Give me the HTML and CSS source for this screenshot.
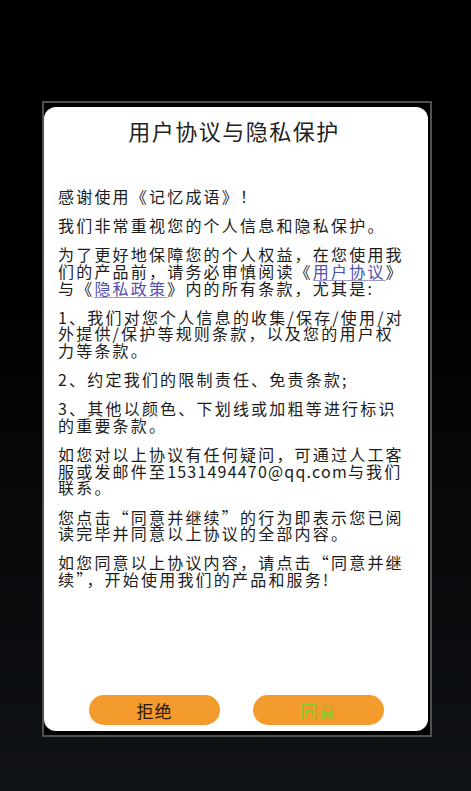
FILE: index.html
```html
<!DOCTYPE html>
<html lang="zh-CN">
<head>
  <meta charset="UTF-8" />
  <meta name="viewport" content="width=device-width, initial-scale=1.0"/>
  <title>用户协议与隐私保护</title>
  <link rel="stylesheet" href="styles.css">
</head>
<body>
  <!-- Privacy dialog -->
  <div class="frame">
    <div class="dialog">
      <h2 class="dialog-title">用户协议与隐私保护</h2>

      <div class="dialog-body">
        <p>感谢使用《记忆成语》！</p>
        <p>我们非常重视您的个人信息和隐私保护。</p>
        <p>为了更好地保障您的个人权益，在您使用我们的产品前，请务必审慎阅读《<a href="#" class="link">用户协议</a>》与《<a href="#" class="link">隐私政策</a>》内的所有条款，尤其是:</p>
        <p>1、我们对您个人信息的收集/保存/使用/对外提供/保护等规则条款，以及您的用户权力等条款。</p>
        <p>2、约定我们的限制责任、免责条款;</p>
        <p>3、其他以颜色、下划线或加粗等进行标识的重要条款。</p>
        <p>如您对以上协议有任何疑问，可通过人工客服或发邮件至<span class="email">1531494470@qq.com</span>与我们联系。</p>
        <p>您点击“同意并继续”的行为即表示您已阅读完毕并同意以上协议的全部内容。</p>
        <p>如您同意以上协议内容，请点击“同意并继续”，开始使用我们的产品和服务!</p>
      </div>

      <div class="dialog-actions">
        <button type="button" class="btn btn-reject">拒绝</button>
        <button type="button" class="btn btn-agree">同意</button>
      </div>
    </div>
  </div>
</body>
</html>
```

FILE: styles.css
```css
html,
body {
  margin: 0;
  height: 791px;
}

body {
  font-family: "Noto Sans CJK SC", "Noto Sans", sans-serif;
  background: linear-gradient(to bottom, #000 0%, #000 35%, #0f1216 100%);
  padding-top: 101px;
  box-sizing: border-box;
}

.frame {
  width: 390px;
  height: 636px;
  margin-left: 42px;
  border: 2px solid #505050;
  box-sizing: border-box;
  background: #000;
  padding: 4px 2px 4px 0;
}

.dialog {
  height: 100%;
  background: #fff;
  border-radius: 12px;
  padding: 8px 18px 6px 14px;
  box-sizing: border-box;
  display: flex;
  flex-direction: column;
  color: #1c1c1c;
}

.dialog-title {
  margin: 0;
  font-size: 22px;
  font-weight: normal;
  line-height: 30px;
  letter-spacing: 1.5px;
  text-align: center;
  color: #222;
}

.dialog-body {
  margin-top: 43px;
  font-size: 16px;
  line-height: 16.7px;
  letter-spacing: 2.2px;
}

.dialog-body p {
  margin: 0 0 12.4px;
}

.email {
  letter-spacing: 1.2px;
}

.link {
  color: #5050ae;
  text-decoration: underline;
  text-decoration-color: #9a9ad0;
  text-underline-offset: 2px;
}

.dialog-actions {
  margin-top: auto;
  margin-left: 5px;
  display: flex;
  justify-content: center;
  gap: 33px;
}

.btn {
  width: 131px;
  height: 30px;
  border: none;
  border-radius: 15px;
  background: #f39b2c;
  font-family: inherit;
  font-size: 17px;
  letter-spacing: 1px;
  padding: 0;
  cursor: pointer;
}

.btn-reject {
  color: #2a1808;
}

.btn-agree {
  color: #86c92a;
}
```
